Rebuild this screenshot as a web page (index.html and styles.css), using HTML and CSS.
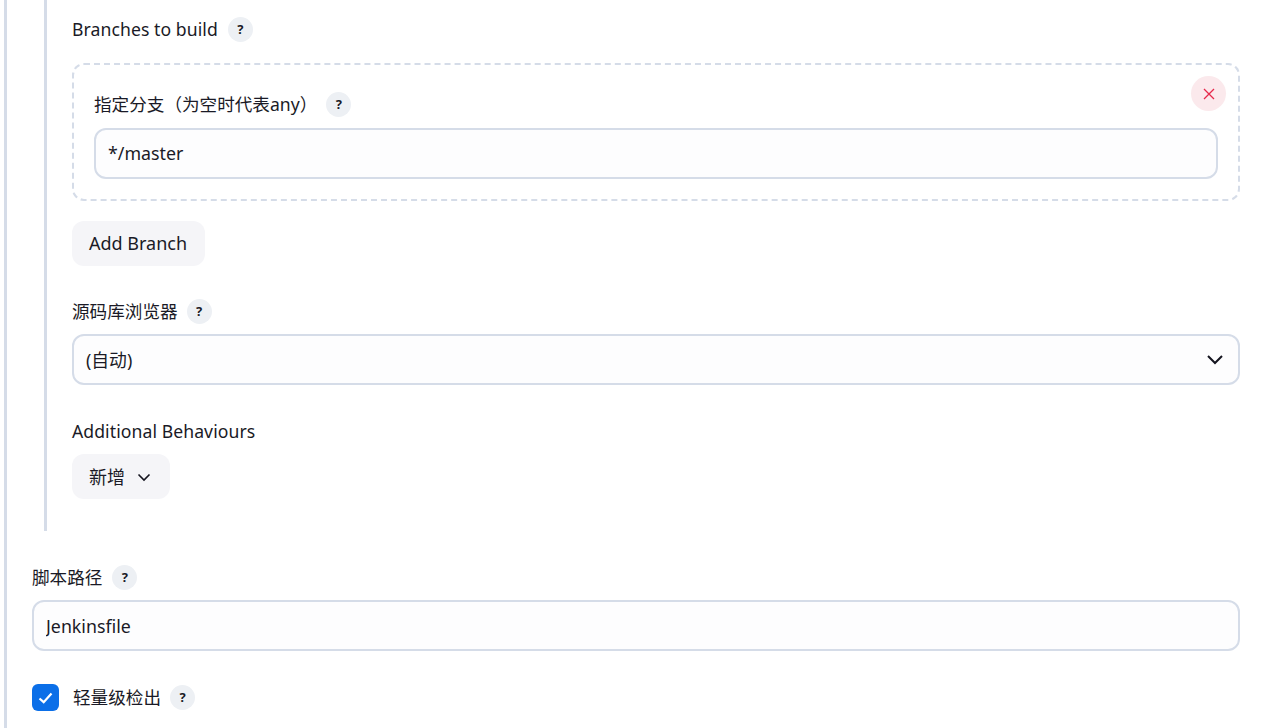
FILE: index.html
```html
<!DOCTYPE html>
<html>

<head>
    <meta charset="UTF-8">
    <title>Pipeline</title>
    <link rel="stylesheet" href="styles.css">
</head>

<body>
    <div class="outer">
        <div class="inner">
            <div class="label-row">
                <span class="latin">Branches to build</span>
                <span class="help">?</span>
            </div>

            <div class="repeat">
                <button class="close" aria-label="Close">
                    <svg width="12" height="12" viewBox="0 0 12 12"><path d="M1 1l10 10M11 1L1 11" /></svg>
                </button>
                <div class="label-row nested">
                    <span>指定分支（为空时代表any）</span>
                    <span class="help">?</span>
                </div>
                <input class="field branch-field" type="text" value="*/master">
            </div>

            <button class="btn add-branch">Add Branch</button>

            <div class="label-row browser">
                <span>源码库浏览器</span>
                <span class="help">?</span>
            </div>
            <div class="field select">
                <span class="select-text">(自动)</span>
                <svg width="18" height="11" viewBox="0 0 18 11"><path d="M2 2l7 7 7-7" /></svg>
            </div>

            <div class="label-row behaviours">
                <span class="latin">Additional Behaviours</span>
            </div>
            <button class="btn add-new">
                <span>新增</span>
                <svg width="14" height="9" viewBox="0 0 14 9"><path d="M1.5 1.5L7 7l5.5-5.5" /></svg>
            </button>
        </div>

        <div class="label-row script">
            <span>脚本路径</span>
            <span class="help">?</span>
        </div>
        <input class="field" type="text" value="Jenkinsfile">

        <div class="check-row">
            <span class="check">
                <svg width="15" height="12" viewBox="0 0 15 12"><path d="M1.5 6.5l4.2 3.7 7.8-8.7" /></svg>
            </span>
            <span class="check-label">轻量级检出</span>
            <span class="help">?</span>
        </div>
    </div>
</body>

</html>
```

FILE: styles.css
```css
* {
    box-sizing: border-box;
}

html,
body {
    height: 100%;
    overflow: hidden;
}

body {
    margin: 0;
    padding-left: 4px;
    background: #fff;
    color: #1a1a26;
    font-family: "Noto Sans", "Noto Sans CJK SC", sans-serif;
    font-size: 17.6px;
}

.outer {
    width: 1236px;
    height: 728px;
    border-left: 3px solid #d5dce8;
    padding-left: 25px;
}

.inner {
    margin-left: 12px;
    height: 531px;
    padding-top: 17px;
    border-left: 3px solid #d5dce8;
    padding-left: 25px;
}

.label-row {
    display: flex;
    align-items: center;
    gap: 10px;
    height: 25px;
    line-height: 25px;
}

.latin {
    letter-spacing: 0.08px;
}

.help {
    width: 25px;
    height: 25px;
    border-radius: 50%;
    background: #edf0f4;
    font-size: 13px;
    font-weight: 700;
    text-align: center;
    line-height: 25px;
}

.repeat {
    position: relative;
    margin-top: 21px;
    height: 138px;
    padding: 27px 20px 0;
    border: 2px dashed #d5dce8;
    border-radius: 12px;
}

.nested {
    margin-bottom: 11px;
    gap: 9px;
}

.close {
    position: absolute;
    top: 11px;
    right: 12px;
    width: 35px;
    height: 35px;
    padding: 0;
    border: none;
    border-radius: 50%;
    background: #fbe9ec;
    display: flex;
    align-items: center;
    justify-content: center;
}

.close path {
    fill: none;
    stroke: #e6294b;
    stroke-width: 1.3;
}

.field {
    display: block;
    width: 100%;
    height: 51px;
    padding: 0 12px;
    border: 2px solid #d5dce8;
    border-radius: 12px;
    background: #fdfdfe;
    color: #1a1a26;
    font-family: inherit;
    font-size: 17.8px;
}

.branch-field {
    padding-bottom: 2px;
}

.select {
    display: flex;
    align-items: center;
    justify-content: space-between;
    padding-right: 14px;
}

.select-text {
    margin-bottom: 2px;
}

.select path,
.add-new path {
    fill: none;
    stroke: #14141f;
    stroke-width: 2;
}

.add-new path {
    stroke-width: 1.6;
}

.add-new svg {
    margin-top: 2px;
}

.btn {
    display: flex;
    align-items: center;
    height: 45px;
    padding-bottom: 2px;
    border: none;
    border-radius: 12px;
    background: #f5f5f8;
    color: #1a1a26;
    font-family: inherit;
    font-size: 18px;
}

.add-branch {
    width: 133px;
    margin-top: 20px;
    padding-left: 17px;
    padding-right: 17px;
}

.browser {
    margin-top: 33px;
    margin-bottom: 10px;
    gap: 9px;
}

.behaviours {
    margin-top: 34px;
    margin-bottom: 10px;
}

.add-new {
    width: 98px;
    padding-left: 17px;
    padding-right: 17px;
    gap: 12px;
}

.script {
    margin-top: 34px;
    margin-bottom: 10px;
}

.check-row {
    display: flex;
    align-items: center;
    margin-top: 33px;
}

.check {
    width: 27px;
    height: 27px;
    border-radius: 6px;
    background: #0b6fe8;
    display: flex;
    align-items: center;
    justify-content: center;
}

.check path {
    fill: none;
    stroke: #fff;
    stroke-width: 2.2;
}

.check-label {
    margin-left: 14px;
    margin-right: 9px;
    line-height: 25px;
}
```
